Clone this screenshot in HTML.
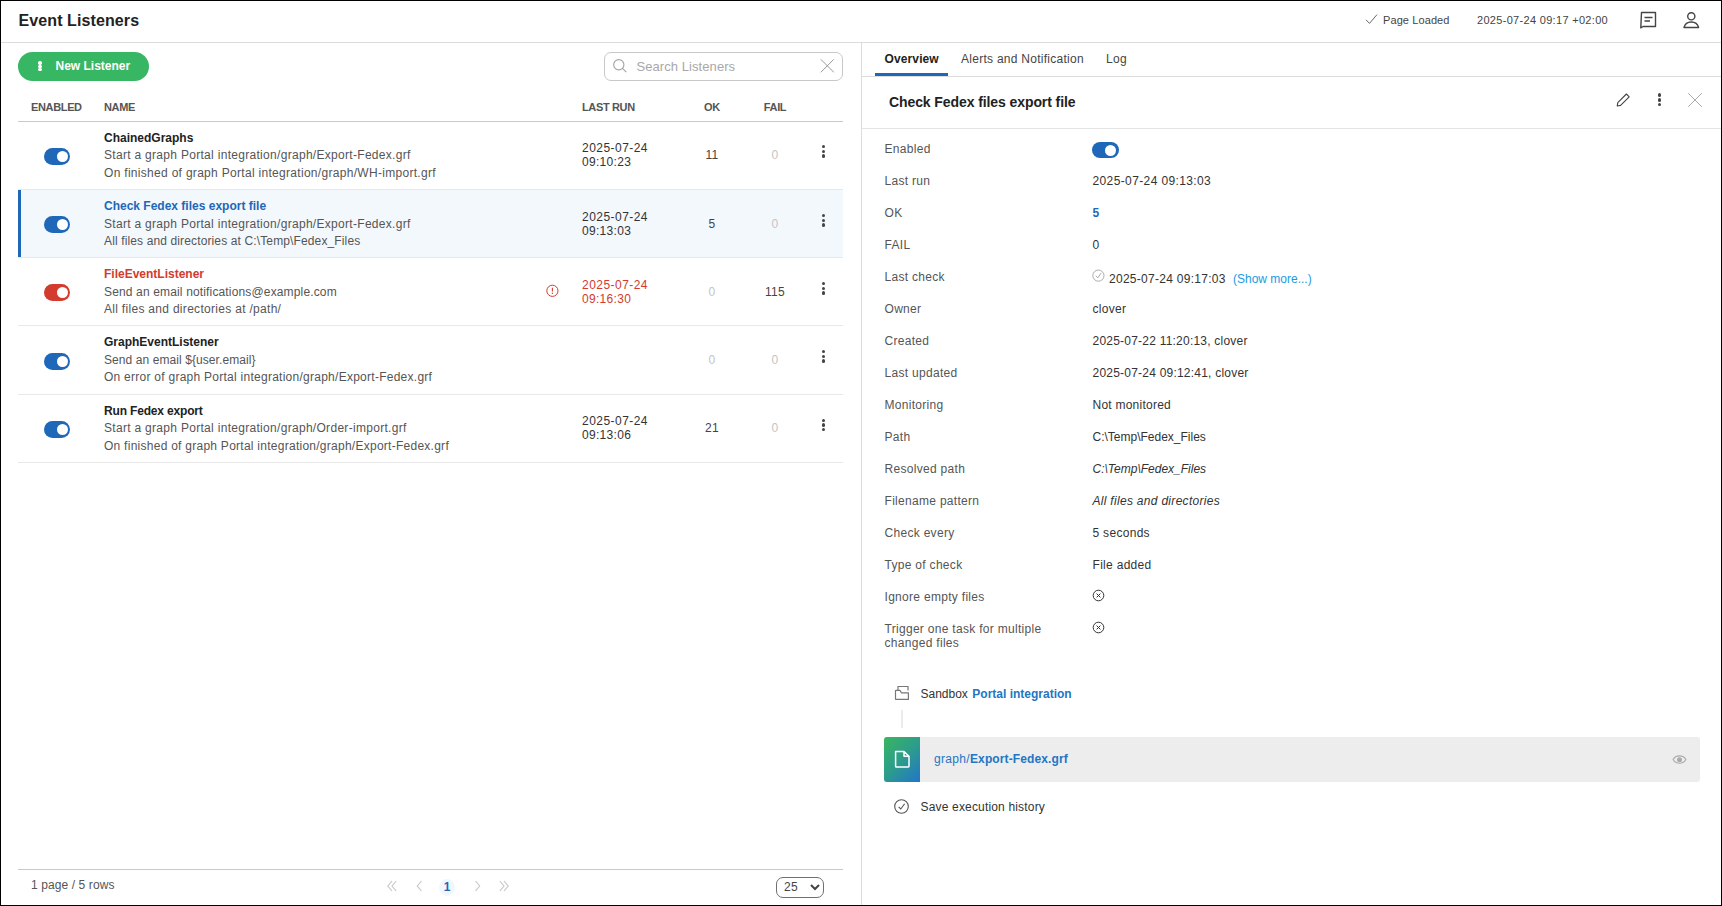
<!DOCTYPE html>
<html><head><meta charset="utf-8"><title>Event Listeners</title>
<style>
html,body{margin:0;padding:0;background:#fff;}
body{width:1722px;height:906px;position:relative;overflow:hidden;font-family:"Liberation Sans",sans-serif;}
.frame{position:absolute;left:0;top:0;width:1722px;height:906px;box-sizing:border-box;border:1px solid #000;pointer-events:none;z-index:10;}
.t{position:absolute;white-space:nowrap;line-height:1;}
.b{position:absolute;}
</style></head><body>
<div class="t" style="left:18.5px;top:13.46px;font-size:16px;font-weight:700;color:#222;letter-spacing:0.1px;">Event Listeners</div>
<div class="b" style="left:1px;top:42px;width:1720px;height:1px;background:#dcdcdc"></div>
<svg class="b" style="left:1364px;top:13px;" width="15" height="12" viewBox="0 0 15 12"><path d="M2 6.8 L5.5 10.4 L13 1.6" fill="none" stroke="#666" stroke-width="1"/></svg>
<div class="t" style="left:1383px;top:15.39px;font-size:11px;font-weight:400;color:#444;letter-spacing:0.1px;">Page Loaded</div>
<div class="t" style="left:1477px;top:15.39px;font-size:11px;font-weight:400;color:#444;letter-spacing:0.31px;">2025-07-24 09:17 +02:00</div>
<svg class="b" style="left:1638px;top:10px;" width="20" height="20" viewBox="0 0 20 20"><path d="M3.5 2.5 H17.5 V16.5 H5 L2.8 17.8 Z" fill="none" stroke="#444" stroke-width="1.4" stroke-linejoin="round"/><path d="M6.5 7.5 H14.5 M6.5 11 H12" stroke="#444" stroke-width="1.4"/></svg>
<svg class="b" style="left:1681px;top:10px;" width="20" height="20" viewBox="0 0 20 20"><circle cx="10.3" cy="6.3" r="3.6" fill="none" stroke="#444" stroke-width="1.4"/><path d="M3 17.5 C4 13.5 7 12 10.3 12 C13.6 12 16.6 13.5 17.6 17.5 Z" fill="none" stroke="#444" stroke-width="1.4" stroke-linejoin="round"/></svg>
<div class="b" style="left:861px;top:43px;width:1px;height:862px;background:#dcdcdc"></div>
<div class="b" style="left:18px;top:52px;width:131px;height:29px;background:#37b664;border-radius:15px"></div>
<div class="b" style="left:38.25px;top:61.25px;width:3.3px;height:3.3px;background:#fff;border-radius:50%"></div>
<div class="b" style="left:38.25px;top:64.64999999999999px;width:3.3px;height:3.3px;background:#fff;border-radius:50%"></div>
<div class="b" style="left:38.25px;top:68.05px;width:3.3px;height:3.3px;background:#fff;border-radius:50%"></div>
<div class="t" style="left:55.5px;top:59.64px;font-size:12px;font-weight:700;color:#fff;letter-spacing:0px;">New Listener</div>
<div class="b" style="left:604px;top:52px;width:239px;height:29px;border:1px solid #c8c8c8;border-radius:7px;box-sizing:border-box;background:#fff"></div>
<svg class="b" style="left:611px;top:57px;" width="18" height="18" viewBox="0 0 18 18"><circle cx="7.8" cy="7.7" r="5.1" fill="none" stroke="#a5a5a5" stroke-width="1.15"/><path d="M11.5 11.4 L15.3 15.2" stroke="#a5a5a5" stroke-width="1.15"/></svg>
<div class="t" style="left:636.5px;top:60.10px;font-size:13px;font-weight:400;color:#a8a8a8;letter-spacing:0.07px;">Search Listeners</div>
<svg class="b" style="left:819px;top:58px;" width="16" height="16" viewBox="0 0 16 16"><path d="M1.8 1.3 L14.8 14.3 M14.8 1.3 L1.8 14.3" stroke="#999" stroke-width="1"/></svg>
<div class="t" style="left:31px;top:101.89px;font-size:11px;font-weight:700;color:#555;letter-spacing:-0.35px;">ENABLED</div>
<div class="t" style="left:104px;top:101.89px;font-size:11px;font-weight:700;color:#555;letter-spacing:-0.35px;">NAME</div>
<div class="t" style="left:582px;top:101.89px;font-size:11px;font-weight:700;color:#555;letter-spacing:-0.35px;">LAST RUN</div>
<div class="t" style="left:662px;width:100px;text-align:center;top:101.89px;font-size:11px;font-weight:700;color:#555;letter-spacing:-0.35px;">OK</div>
<div class="t" style="left:725px;width:100px;text-align:center;top:101.89px;font-size:11px;font-weight:700;color:#555;letter-spacing:-0.35px;">FAIL</div>
<div class="b" style="left:18px;top:121px;width:825px;height:1px;background:#c9c9c9"></div>
<div class="b" style="left:44px;top:148.0px;width:26px;height:17px;background:#1f67b8;border-radius:9px"></div>
<div class="b" style="left:56.8px;top:150.9px;width:11.2px;height:11.2px;background:#fff;border-radius:50%"></div>
<div class="t" style="left:104px;top:131.84px;font-size:12px;font-weight:700;color:#222;letter-spacing:0px;">ChainedGraphs</div>
<div class="t" style="left:104px;top:149.34px;font-size:12px;font-weight:400;color:#555;letter-spacing:0.3px;">Start a graph Portal integration/graph/Export-Fedex.grf</div>
<div class="t" style="left:104px;top:166.84px;font-size:12px;font-weight:400;color:#555;letter-spacing:0.3px;">On finished of graph Portal integration/graph/WH-import.grf</div>
<div class="t" style="left:582px;top:141.84px;font-size:12px;font-weight:400;color:#333;letter-spacing:0.46px;">2025-07-24</div>
<div class="t" style="left:582px;top:155.84px;font-size:12px;font-weight:400;color:#333;letter-spacing:0.3px;">09:10:23</div>
<div class="t" style="left:662px;width:100px;text-align:center;top:148.84px;font-size:12px;font-weight:400;color:#444;letter-spacing:0.3px;">11</div>
<div class="t" style="left:725px;width:100px;text-align:center;top:148.84px;font-size:12px;font-weight:400;color:#c4c4c4;letter-spacing:0.3px;">0</div>
<div class="b" style="left:822.2px;top:145.20000000000002px;width:3.3px;height:3.3px;background:#444;border-radius:50%"></div>
<div class="b" style="left:822.2px;top:149.8px;width:3.3px;height:3.3px;background:#444;border-radius:50%"></div>
<div class="b" style="left:822.2px;top:154.4px;width:3.3px;height:3.3px;background:#444;border-radius:50%"></div>
<div class="b" style="left:18px;top:189px;width:825px;height:1px;background:#e8e8e8"></div>
<div class="b" style="left:18px;top:190px;width:825px;height:67px;background:#f3f8fc"></div>
<div class="b" style="left:18px;top:190px;width:3px;height:67px;background:#1f67b8"></div>
<div class="b" style="left:44px;top:216.2px;width:26px;height:17px;background:#1f67b8;border-radius:9px"></div>
<div class="b" style="left:56.8px;top:219.10000000000002px;width:11.2px;height:11.2px;background:#fff;border-radius:50%"></div>
<div class="t" style="left:104px;top:200.04px;font-size:12px;font-weight:700;color:#1f67b8;letter-spacing:0px;">Check Fedex files export file</div>
<div class="t" style="left:104px;top:217.54px;font-size:12px;font-weight:400;color:#555;letter-spacing:0.3px;">Start a graph Portal integration/graph/Export-Fedex.grf</div>
<div class="t" style="left:104px;top:235.04px;font-size:12px;font-weight:400;color:#555;letter-spacing:0.13px;">All files and directories at C:\Temp\Fedex_Files</div>
<div class="t" style="left:582px;top:210.84px;font-size:12px;font-weight:400;color:#333;letter-spacing:0.46px;">2025-07-24</div>
<div class="t" style="left:582px;top:224.84px;font-size:12px;font-weight:400;color:#333;letter-spacing:0.3px;">09:13:03</div>
<div class="t" style="left:662px;width:100px;text-align:center;top:217.84px;font-size:12px;font-weight:400;color:#444;letter-spacing:0.3px;">5</div>
<div class="t" style="left:725px;width:100px;text-align:center;top:217.84px;font-size:12px;font-weight:400;color:#c4c4c4;letter-spacing:0.3px;">0</div>
<div class="b" style="left:822.2px;top:214.20000000000002px;width:3.3px;height:3.3px;background:#444;border-radius:50%"></div>
<div class="b" style="left:822.2px;top:218.8px;width:3.3px;height:3.3px;background:#444;border-radius:50%"></div>
<div class="b" style="left:822.2px;top:223.4px;width:3.3px;height:3.3px;background:#444;border-radius:50%"></div>
<div class="b" style="left:18px;top:257px;width:825px;height:1px;background:#e8e8e8"></div>
<div class="b" style="left:44px;top:284.4px;width:26px;height:17px;background:#d23b2e;border-radius:9px"></div>
<div class="b" style="left:56.8px;top:287.3px;width:11.2px;height:11.2px;background:#fff;border-radius:50%"></div>
<div class="t" style="left:104px;top:268.24px;font-size:12px;font-weight:700;color:#d23b2e;letter-spacing:0px;">FileEventListener</div>
<div class="t" style="left:104px;top:285.74px;font-size:12px;font-weight:400;color:#555;letter-spacing:0.15px;">Send an email notifications@example.com</div>
<div class="t" style="left:104px;top:303.24px;font-size:12px;font-weight:400;color:#555;letter-spacing:0.3px;">All files and directories at /path/</div>
<div class="t" style="left:582px;top:278.84px;font-size:12px;font-weight:400;color:#d23b2e;letter-spacing:0.46px;">2025-07-24</div>
<div class="t" style="left:582px;top:292.84px;font-size:12px;font-weight:400;color:#d23b2e;letter-spacing:0.3px;">09:16:30</div>
<svg class="b" style="left:545px;top:284px;" width="15" height="15" viewBox="0 0 15 15"><circle cx="7.4" cy="6.8" r="5.6" fill="none" stroke="#d23b2e" stroke-width="1"/><path d="M7.4 3.8 V7.4" stroke="#d23b2e" stroke-width="1.1"/><circle cx="7.4" cy="9.3" r="0.7" fill="#d23b2e"/></svg>
<div class="t" style="left:662px;width:100px;text-align:center;top:285.84px;font-size:12px;font-weight:400;color:#c4c4c4;letter-spacing:0.3px;">0</div>
<div class="t" style="left:725px;width:100px;text-align:center;top:285.84px;font-size:12px;font-weight:400;color:#444;letter-spacing:0.3px;">115</div>
<div class="b" style="left:822.2px;top:282.19999999999993px;width:3.3px;height:3.3px;background:#444;border-radius:50%"></div>
<div class="b" style="left:822.2px;top:286.79999999999995px;width:3.3px;height:3.3px;background:#444;border-radius:50%"></div>
<div class="b" style="left:822.2px;top:291.4px;width:3.3px;height:3.3px;background:#444;border-radius:50%"></div>
<div class="b" style="left:18px;top:325px;width:825px;height:1px;background:#e8e8e8"></div>
<div class="b" style="left:44px;top:352.6px;width:26px;height:17px;background:#1f67b8;border-radius:9px"></div>
<div class="b" style="left:56.8px;top:355.5px;width:11.2px;height:11.2px;background:#fff;border-radius:50%"></div>
<div class="t" style="left:104px;top:336.44px;font-size:12px;font-weight:700;color:#222;letter-spacing:0px;">GraphEventListener</div>
<div class="t" style="left:104px;top:353.94px;font-size:12px;font-weight:400;color:#555;letter-spacing:0.08px;">Send an email ${user.email}</div>
<div class="t" style="left:104px;top:371.44px;font-size:12px;font-weight:400;color:#555;letter-spacing:0.26px;">On error of graph Portal integration/graph/Export-Fedex.grf</div>
<div class="t" style="left:662px;width:100px;text-align:center;top:353.84px;font-size:12px;font-weight:400;color:#c4c4c4;letter-spacing:0.3px;">0</div>
<div class="t" style="left:725px;width:100px;text-align:center;top:353.84px;font-size:12px;font-weight:400;color:#c4c4c4;letter-spacing:0.3px;">0</div>
<div class="b" style="left:822.2px;top:350.19999999999993px;width:3.3px;height:3.3px;background:#444;border-radius:50%"></div>
<div class="b" style="left:822.2px;top:354.79999999999995px;width:3.3px;height:3.3px;background:#444;border-radius:50%"></div>
<div class="b" style="left:822.2px;top:359.4px;width:3.3px;height:3.3px;background:#444;border-radius:50%"></div>
<div class="b" style="left:18px;top:394px;width:825px;height:1px;background:#e8e8e8"></div>
<div class="b" style="left:44px;top:420.8px;width:26px;height:17px;background:#1f67b8;border-radius:9px"></div>
<div class="b" style="left:56.8px;top:423.70000000000005px;width:11.2px;height:11.2px;background:#fff;border-radius:50%"></div>
<div class="t" style="left:104px;top:404.64px;font-size:12px;font-weight:700;color:#222;letter-spacing:-0.17px;">Run Fedex export</div>
<div class="t" style="left:104px;top:422.14px;font-size:12px;font-weight:400;color:#555;letter-spacing:0.3px;">Start a graph Portal integration/graph/Order-import.grf</div>
<div class="t" style="left:104px;top:439.64px;font-size:12px;font-weight:400;color:#555;letter-spacing:0.26px;">On finished of graph Portal integration/graph/Export-Fedex.grf</div>
<div class="t" style="left:582px;top:415.34px;font-size:12px;font-weight:400;color:#333;letter-spacing:0.46px;">2025-07-24</div>
<div class="t" style="left:582px;top:429.34px;font-size:12px;font-weight:400;color:#333;letter-spacing:0.3px;">09:13:06</div>
<div class="t" style="left:662px;width:100px;text-align:center;top:422.34px;font-size:12px;font-weight:400;color:#444;letter-spacing:0.3px;">21</div>
<div class="t" style="left:725px;width:100px;text-align:center;top:422.34px;font-size:12px;font-weight:400;color:#c4c4c4;letter-spacing:0.3px;">0</div>
<div class="b" style="left:822.2px;top:418.69999999999993px;width:3.3px;height:3.3px;background:#444;border-radius:50%"></div>
<div class="b" style="left:822.2px;top:423.29999999999995px;width:3.3px;height:3.3px;background:#444;border-radius:50%"></div>
<div class="b" style="left:822.2px;top:427.9px;width:3.3px;height:3.3px;background:#444;border-radius:50%"></div>
<div class="b" style="left:18px;top:462px;width:825px;height:1px;background:#e8e8e8"></div>
<div class="b" style="left:18px;top:869px;width:825px;height:1px;background:#c9c9c9"></div>
<div class="t" style="left:31px;top:878.84px;font-size:12px;font-weight:400;color:#555;letter-spacing:0.1px;">1 page / 5 rows</div>
<svg class="b" style="left:385px;top:879px;" width="14" height="14" viewBox="0 0 14 14"><path d="M7 2 L2.8 7 L7 12 M11.2 2 L7 7 L11.2 12" fill="none" stroke="#c4c4c4" stroke-width="1.1"/></svg>
<svg class="b" style="left:413px;top:879px;" width="12" height="14" viewBox="0 0 12 14"><path d="M8.5 2 L4.3 7 L8.5 12" fill="none" stroke="#c4c4c4" stroke-width="1.1"/></svg>
<div class="b" style="left:439px;top:878.5px;width:16px;height:17px;background:#f1f7fd;border-radius:50%"></div>
<div class="t" style="left:397px;width:100px;text-align:center;top:880.84px;font-size:12px;font-weight:700;color:#1f67b8;letter-spacing:0px;">1</div>
<svg class="b" style="left:472px;top:879px;" width="12" height="14" viewBox="0 0 12 14"><path d="M3.5 2 L7.7 7 L3.5 12" fill="none" stroke="#c4c4c4" stroke-width="1.1"/></svg>
<svg class="b" style="left:497px;top:879px;" width="14" height="14" viewBox="0 0 14 14"><path d="M2.8 2 L7 7 L2.8 12 M7 2 L11.2 7 L7 12" fill="none" stroke="#c4c4c4" stroke-width="1.1"/></svg>
<div class="b" style="left:776px;top:877px;width:48px;height:21px;border:1px solid #707070;border-radius:7px;box-sizing:border-box"></div>
<div class="t" style="left:784px;top:880.84px;font-size:12px;font-weight:400;color:#444;letter-spacing:0.4px;">25</div>
<svg class="b" style="left:808px;top:882px;" width="14" height="10" viewBox="0 0 14 10"><path d="M3 3 L7 7 L11 3" fill="none" stroke="#444" stroke-width="2"/></svg>
<div class="t" style="left:884.5px;top:52.54px;font-size:12px;font-weight:700;color:#222;letter-spacing:0.12px;">Overview</div>
<div class="t" style="left:961px;top:52.54px;font-size:12px;font-weight:400;color:#444;letter-spacing:0.27px;">Alerts and Notification</div>
<div class="t" style="left:1106px;top:52.54px;font-size:12px;font-weight:400;color:#444;letter-spacing:0.3px;">Log</div>
<div class="b" style="left:862px;top:76px;width:859px;height:1px;background:#dcdcdc"></div>
<div class="b" style="left:875px;top:73px;width:73px;height:3px;background:#1f67b8"></div>
<div class="t" style="left:889px;top:94.95px;font-size:14px;font-weight:700;color:#222;letter-spacing:-0.09px;">Check Fedex files export file</div>
<svg class="b" style="left:1614px;top:90.8px;" width="18" height="18" viewBox="0 0 18 18"><path d="M3.2 15 L3.8 11.6 L12.4 3 L15.2 5.8 L6.6 14.4 Z" fill="none" stroke="#444" stroke-width="1.1" stroke-linejoin="round"/></svg>
<div class="b" style="left:1657.5px;top:93.3px;width:3.8px;height:3.8px;background:#444;border-radius:50%"></div>
<div class="b" style="left:1657.5px;top:98.0px;width:3.8px;height:3.8px;background:#444;border-radius:50%"></div>
<div class="b" style="left:1657.5px;top:102.69999999999999px;width:3.8px;height:3.8px;background:#444;border-radius:50%"></div>
<svg class="b" style="left:1686px;top:91px;" width="18" height="18" viewBox="0 0 18 18"><path d="M2.2 2.2 L15.8 15.8 M15.8 2.2 L2.2 15.8" stroke="#aaa" stroke-width="1"/></svg>
<div class="b" style="left:862px;top:128px;width:859px;height:1px;background:#e4e4e4"></div>
<div class="t" style="left:884.5px;top:142.84px;font-size:12px;font-weight:400;color:#555;letter-spacing:0.3px;">Enabled</div>
<div class="t" style="left:884.5px;top:174.84px;font-size:12px;font-weight:400;color:#555;letter-spacing:0.3px;">Last run</div>
<div class="t" style="left:884.5px;top:206.84px;font-size:12px;font-weight:400;color:#555;letter-spacing:0.3px;">OK</div>
<div class="t" style="left:884.5px;top:238.84px;font-size:12px;font-weight:400;color:#555;letter-spacing:0.3px;">FAIL</div>
<div class="t" style="left:884.5px;top:270.84px;font-size:12px;font-weight:400;color:#555;letter-spacing:0.3px;">Last check</div>
<div class="t" style="left:884.5px;top:302.84px;font-size:12px;font-weight:400;color:#555;letter-spacing:0.3px;">Owner</div>
<div class="t" style="left:884.5px;top:334.84px;font-size:12px;font-weight:400;color:#555;letter-spacing:0.3px;">Created</div>
<div class="t" style="left:884.5px;top:366.84px;font-size:12px;font-weight:400;color:#555;letter-spacing:0.3px;">Last updated</div>
<div class="t" style="left:884.5px;top:398.84px;font-size:12px;font-weight:400;color:#555;letter-spacing:0.3px;">Monitoring</div>
<div class="t" style="left:884.5px;top:430.84px;font-size:12px;font-weight:400;color:#555;letter-spacing:0.3px;">Path</div>
<div class="t" style="left:884.5px;top:462.84px;font-size:12px;font-weight:400;color:#555;letter-spacing:0.3px;">Resolved path</div>
<div class="t" style="left:884.5px;top:494.84px;font-size:12px;font-weight:400;color:#555;letter-spacing:0.3px;">Filename pattern</div>
<div class="t" style="left:884.5px;top:526.84px;font-size:12px;font-weight:400;color:#555;letter-spacing:0.3px;">Check every</div>
<div class="t" style="left:884.5px;top:558.84px;font-size:12px;font-weight:400;color:#555;letter-spacing:0.3px;">Type of check</div>
<div class="t" style="left:884.5px;top:590.84px;font-size:12px;font-weight:400;color:#555;letter-spacing:0.3px;">Ignore empty files</div>
<div class="t" style="left:884.5px;top:622.84px;font-size:12px;font-weight:400;color:#555;letter-spacing:0.3px;">Trigger one task for multiple</div>
<div class="t" style="left:884.5px;top:636.84px;font-size:12px;font-weight:400;color:#555;letter-spacing:0.3px;">changed files</div>
<div class="b" style="left:1092px;top:142px;width:27px;height:16px;background:#1f67b8;border-radius:8px"></div>
<div class="b" style="left:1104.5px;top:144.5px;width:11px;height:11px;background:#fff;border-radius:50%"></div>
<div class="t" style="left:1092.5px;top:174.84px;font-size:12px;font-weight:400;color:#333;letter-spacing:0.38px;">2025-07-24 09:13:03</div>
<div class="t" style="left:1092.5px;top:206.84px;font-size:12px;font-weight:700;color:#1f67b8;letter-spacing:0px;">5</div>
<div class="t" style="left:1092.5px;top:238.84px;font-size:12px;font-weight:400;color:#333;letter-spacing:0.3px;">0</div>
<svg class="b" style="left:1091px;top:268px;" width="15" height="15" viewBox="0 0 15 15"><circle cx="7.4" cy="7.6" r="5.6" fill="none" stroke="#aaa" stroke-width="1"/><path d="M4.8 7.8 L6.8 9.8 L10.2 5" fill="none" stroke="#aaa" stroke-width="1"/></svg>
<div class="t" style="left:1109px;top:272.84px;font-size:12px;font-weight:400;color:#333;letter-spacing:0.28px;">2025-07-24 09:17:03</div>
<div class="t" style="left:1233px;top:272.84px;font-size:12px;font-weight:400;color:#1d9ae0;letter-spacing:0px;">(Show more...)</div>
<div class="t" style="left:1092.5px;top:302.84px;font-size:12px;font-weight:400;color:#333;letter-spacing:0.3px;">clover</div>
<div class="t" style="left:1092.5px;top:334.84px;font-size:12px;font-weight:400;color:#333;letter-spacing:0.22px;">2025-07-22 11:20:13, clover</div>
<div class="t" style="left:1092.5px;top:366.84px;font-size:12px;font-weight:400;color:#333;letter-spacing:0.22px;">2025-07-24 09:12:41, clover</div>
<div class="t" style="left:1092.5px;top:398.84px;font-size:12px;font-weight:400;color:#333;letter-spacing:0.24px;">Not monitored</div>
<div class="t" style="left:1092.5px;top:430.84px;font-size:12px;font-weight:400;color:#333;letter-spacing:0px;">C:\Temp\Fedex_Files</div>
<div class="t" style="left:1092.5px;top:462.84px;font-size:12px;font-weight:400;color:#333;letter-spacing:0px;font-style:italic;">C:\Temp\Fedex_Files</div>
<div class="t" style="left:1092.5px;top:494.84px;font-size:12px;font-weight:400;color:#333;letter-spacing:0.3px;font-style:italic;">All files and directories</div>
<div class="t" style="left:1092.5px;top:526.84px;font-size:12px;font-weight:400;color:#333;letter-spacing:0.3px;">5 seconds</div>
<div class="t" style="left:1092.5px;top:558.84px;font-size:12px;font-weight:400;color:#333;letter-spacing:0.3px;">File added</div>
<svg class="b" style="left:1091px;top:588.0px;" width="15" height="15" viewBox="0 0 15 15"><circle cx="7.5" cy="7.5" r="5.3" fill="none" stroke="#333" stroke-width="1"/><path d="M5.6 5.6 L9.4 9.4 M9.4 5.6 L5.6 9.4" stroke="#333" stroke-width="1"/></svg>
<svg class="b" style="left:1091px;top:620.0px;" width="15" height="15" viewBox="0 0 15 15"><circle cx="7.5" cy="7.5" r="5.3" fill="none" stroke="#333" stroke-width="1"/><path d="M5.6 5.6 L9.4 9.4 M9.4 5.6 L5.6 9.4" stroke="#333" stroke-width="1"/></svg>
<svg class="b" style="left:893px;top:684px;" width="18" height="18" viewBox="0 0 18 18"><path d="M5 6.5 V2.5 H15 V6.5" fill="none" stroke="#777" stroke-width="1.2"/><path d="M2.5 15 V7 Q2.5 6.4 3.1 6.4 H7 L8.4 8.8 H15.4 V15.4 H2.9 Q2.5 15.4 2.5 15 Z" fill="none" stroke="#777" stroke-width="1.2" stroke-linejoin="round"/></svg>
<div class="t" style="left:920.5px;top:688.04px;font-size:12px;font-weight:400;color:#333;letter-spacing:0px;">Sandbox</div>
<div class="t" style="left:972.3px;top:688.04px;font-size:12px;font-weight:700;color:#2276c4;letter-spacing:0px;">Portal integration</div>
<div class="b" style="left:901.2px;top:710px;width:1.8px;height:18px;background:#ebebeb"></div>
<div class="b" style="left:884px;top:737px;width:816px;height:45px;background:#ededed;border-radius:3px"></div>
<div class="b" style="left:884px;top:737px;width:36px;height:45px;background:linear-gradient(135deg,#39b75e 0%,#2c9c8c 50%,#2274cc 100%);border-radius:3px 0 0 3px"></div>
<svg class="b" style="left:893px;top:749px;" width="18" height="20" viewBox="0 0 18 20"><path d="M2.6 2.5 H11 L16 7.3 V17.3 Q16 18 15.2 18 H3.4 Q2.6 18 2.6 17.2 Z M11 2.5 V7.3 H16" fill="none" stroke="#fff" stroke-width="1.5" stroke-linejoin="round"/></svg>
<div class="t" style="left:934px;top:752.84px;font-size:12px;font-weight:400;color:#2276c4;letter-spacing:0.3px;">graph/</div>
<div class="t" style="left:970px;top:752.84px;font-size:12px;font-weight:700;color:#2276c4;letter-spacing:0.12px;">Export-Fedex.grf</div>
<svg class="b" style="left:1671px;top:752px;" width="17" height="14" viewBox="0 0 17 14"><path d="M2.1 7.5 C4.6 2.6 12.4 2.6 14.9 7.5 C12.4 12.4 4.6 12.4 2.1 7.5 Z" fill="none" stroke="#aaa" stroke-width="1.1"/><circle cx="8.5" cy="7.7" r="2.5" fill="#aaa"/></svg>
<svg class="b" style="left:893px;top:798px;" width="17" height="17" viewBox="0 0 17 17"><circle cx="8.5" cy="8.5" r="6.8" fill="none" stroke="#555" stroke-width="1.1"/><path d="M5.6 8.8 L7.8 11 L11.6 5.8" fill="none" stroke="#555" stroke-width="1.1"/></svg>
<div class="t" style="left:920.5px;top:800.84px;font-size:12px;font-weight:400;color:#333;letter-spacing:0.17px;">Save execution history</div>
<div class="frame"></div>
</body></html>
